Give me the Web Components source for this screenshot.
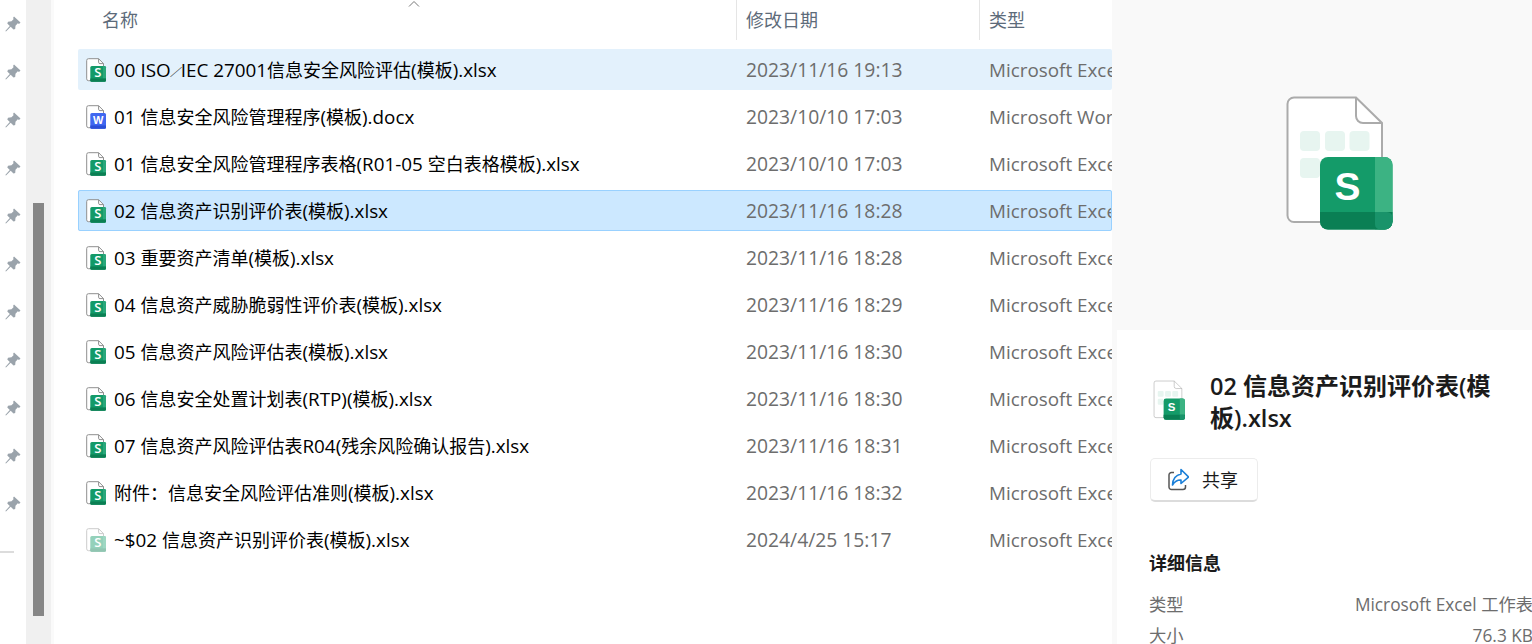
<!DOCTYPE html>
<html lang="zh-CN"><head><meta charset="utf-8"><title>Explorer</title>
<style>
html,body{margin:0;height:100%;overflow:hidden;background:#fff}
body{font-family:"Open Sans","Noto Sans CJK SC",sans-serif}
</style></head><body>
<explorer-app>
  <nav-rail slot="rail"></nav-rail>
  <list-scroll slot="scroll"></list-scroll>
  <file-list slot="list">
    <file-row kind="s" state="hover" name="00 ISO∕IEC 27001信息安全风险评估(模板).xlsx" date="2023/11/16 19:13" type="Microsoft Excel 工作表"></file-row>
    <file-row kind="w" name="01 信息安全风险管理程序(模板).docx" date="2023/10/10 17:03" type="Microsoft Word 文档"></file-row>
    <file-row kind="s" name="01 信息安全风险管理程序表格(R01-05 空白表格模板).xlsx" date="2023/10/10 17:03" type="Microsoft Excel 工作表"></file-row>
    <file-row kind="s" state="selected" name="02 信息资产识别评价表(模板).xlsx" date="2023/11/16 18:28" type="Microsoft Excel 工作表"></file-row>
    <file-row kind="s" name="03 重要资产清单(模板).xlsx" date="2023/11/16 18:28" type="Microsoft Excel 工作表"></file-row>
    <file-row kind="s" name="04 信息资产威胁脆弱性评价表(模板).xlsx" date="2023/11/16 18:29" type="Microsoft Excel 工作表"></file-row>
    <file-row kind="s" name="05 信息资产风险评估表(模板).xlsx" date="2023/11/16 18:30" type="Microsoft Excel 工作表"></file-row>
    <file-row kind="s" name="06 信息安全处置计划表(RTP)(模板).xlsx" date="2023/11/16 18:30" type="Microsoft Excel 工作表"></file-row>
    <file-row kind="s" name="07 信息资产风险评估表R04(残余风险确认报告).xlsx" date="2023/11/16 18:31" type="Microsoft Excel 工作表"></file-row>
    <file-row kind="s" name="附件：信息安全风险评估准则(模板).xlsx" date="2023/11/16 18:32" type="Microsoft Excel 工作表"></file-row>
    <file-row kind="s" faded name="~$02 信息资产识别评价表(模板).xlsx" date="2024/4/25 15:17" type="Microsoft Excel 工作表"></file-row>
  </file-list>
  <detail-pane slot="detail"></detail-pane>
</explorer-app>
<script>
const runs=t=>t.replace(/[\u0020-\u024f]+/g,m=>`<span class="l">${m}</span>`).replace(/∕/g,'<span class="c">∕</span>');
const docPath=`<path d="M2.5 .7H12.6L17.5 5.6V21.4a1.3 1.3 0 0 1-1.3 1.3H2.5a1.8 1.8 0 0 1-1.8-1.8V2.5A1.8 1.8 0 0 1 2.5 .7Z" fill="#fff" stroke="#8f8f8f" stroke-width="1"/>
<path d="M12.6 .7V4.2a1.4 1.4 0 0 0 1.4 1.4H17.5" fill="none" stroke="#8f8f8f" stroke-width="1"/>`;
const sIcon=(faded)=>`<svg width="21" height="24" viewBox="0 0 21 24" style="display:block;${faded?'opacity:.45':''}">${docPath}
<rect x="4.300" y="8" width="15.700" height="15.700" rx="1.500" fill="#139a68"/>
<path d="M17 8H18.500a1.500 1.500 0 0 1 1.500 1.500V20.500H17Z" fill="#2aa77a"/>
<path d="M4.300 20.500H20V22.200a1.500 1.500 0 0 1-1.500 1.500H5.800a1.500 1.500 0 0 1-1.500-1.500Z" fill="#0b7f53"/>
<text x="11.800" y="19.300" text-anchor="middle" font-family="Open Sans" font-weight="600" font-size="13" fill="#fff">S</text></svg>`;
const wIcon=()=>`<svg width="21" height="24" viewBox="0 0 21 24" style="display:block">${docPath}
<rect x="4.300" y="8" width="15.700" height="15.700" rx="1.500" fill="#3f67f0"/>
<path d="M4.300 20.500H20V22.200a1.500 1.500 0 0 1-1.500 1.500H5.800a1.500 1.500 0 0 1-1.500-1.500Z" fill="#2b4fd6"/>
<text x="12.100" y="19.200" text-anchor="middle" font-family="Liberation Sans" font-weight="700" font-size="11" fill="#fff">W</text></svg>`;
const bigIcon=(w,h)=>`<svg width="${w}" height="${h}" viewBox="0 0 112 136" style="display:block">
<path d="M10 3.500H72L98 29V122a6 6 0 0 1-6 6H10a6.500 6.500 0 0 1-6.500-6.500V10A6.500 6.500 0 0 1 10 3.500Z" fill="#fff" stroke="#ababab" stroke-width="2"/>
<path d="M72 3.500V22a7 7 0 0 0 7 7H98" fill="none" stroke="#ababab" stroke-width="2"/>
<g fill="#e7f5f0"><rect x="16" y="37" width="20" height="20" rx="4"/><rect x="41" y="37" width="20" height="20" rx="4"/><rect x="65.500" y="37" width="20" height="20" rx="4"/><rect x="16" y="64" width="20" height="20" rx="4"/></g>
<rect x="36" y="63" width="72.500" height="72.500" rx="8" fill="#149b69"/>
<path d="M91 63H100.500a8 8 0 0 1 8 8V127.500a8 8 0 0 1-8 8H91Z" fill="#3cb383"/>
<path d="M36 118H108.500V127.500a8 8 0 0 1-8 8H44a8 8 0 0 1-8-8Z" fill="#0a7f54"/>
<path d="M91 118H103a5.500 5.500 0 0 1 5.500 5.500V127.500a8 8 0 0 1-8 8H96a5 5 0 0 1-5-5Z" fill="#19936a"/>
<text x="63.500" y="106" text-anchor="middle" font-family="Liberation Sans" font-weight="700" font-size="39" fill="#fff">S</text></svg>`;

class Base extends HTMLElement{
  render(css,html){const r=this.shadowRoot||this.attachShadow({mode:'open'});r.innerHTML=`<style>${css}</style>${html}`}
}
customElements.define('explorer-app',class extends Base{connectedCallback(){this.render(`
:host{display:flex;width:1532px;height:644px;overflow:hidden;background:#fff;font-family:"Open Sans","Noto Sans CJK SC",sans-serif}
.strip{flex:0 0 5px;background:#f9f9f9}
`,`<slot name="rail"></slot><slot name="scroll"></slot><slot name="list"></slot><div class="strip"></div><slot name="detail"></slot>`)}});

customElements.define('nav-rail',class extends Base{connectedCallback(){
const pin=`<svg width="16" height="16" viewBox="0 0 16 16"><path d="M9 .5 15.500 6.500 14 8 12.800 7.300 10.500 9.800 10.200 13 8.500 13.600 5.700 10.700 1 15.500 .3 15 4.800 9.900 2.300 7.500 3 5.800 6.500 5.200 8.700 3 8 2Z" fill="#9aa3ab"/></svg>`;
this.render(`:host{display:block;flex:0 0 26px;width:26px;height:644px;position:relative;overflow:hidden}
.pin{height:48px;display:flex;align-items:center;justify-content:center;box-sizing:border-box}
svg{display:block}
.rule{height:2px;width:14px;background:#dcdcdc;margin-top:23px}
.cut{font:15px "Open Sans",sans-serif;color:#333;line-height:20px;margin-top:90px;white-space:nowrap}`,
Array(11).fill(`<div class="pin">${pin}</div>`).join('')+`<div class="rule"></div><div class="cut">CCF</div>`)}});

customElements.define('list-scroll',class extends Base{connectedCallback(){this.render(`
:host{display:flex;flex:0 0 26px;width:26px;height:644px;box-sizing:border-box;background:#f0f0f0;padding:203px 7px 28px;border-right:1px solid #f0f0f0}
.thumb{flex:1;background:#868686}`,`<div class="thumb"></div>`)}});

customElements.define('file-list',class extends Base{connectedCallback(){this.render(`
:host{display:block;flex:0 0 1061px;width:1061px;height:644px;padding-left:24px;box-sizing:border-box;font-size:18px;overflow:hidden;border-left:3px solid #fafafa;margin-left:-1px}
.head{display:grid;grid-template-columns:658px 243px 133px;height:40px;margin-bottom:9px;color:#5d6b7a;position:relative}
.head div{display:flex;align-items:center;line-height:40px;font-size:18px;box-sizing:border-box;padding-left:9px}
.head div+div{border-left:1px solid #e5e5e5}
.head div:first-child{padding-left:24px}
.sort{position:absolute;left:330px;top:0}
.rows{display:flex;flex-direction:column;gap:6px}`,
`<div class="head"><div>名称</div><div>修改日期</div><div>类型</div><svg class="sort" width="12" height="8" viewBox="0 0 12 8"><path d="M1 6.500 6 1.500 11 6.500" fill="none" stroke="#777" stroke-width="1"/></svg></div><div class="rows"><slot></slot></div>`)}});

customElements.define('file-row',class extends Base{connectedCallback(){
const k=this.getAttribute('kind'),f=this.hasAttribute('faded');
this.render(`
:host{display:grid;grid-template-columns:658px 243px 133px;height:41px;box-sizing:border-box;align-items:center;border-radius:2px;overflow:hidden;white-space:nowrap}
:host([state=hover]){background:#e3f1fc}
:host([state=selected]){background:#cce8ff;outline:1px solid #99d1ff;outline-offset:-1px}
.n{display:flex;align-items:center;gap:7px;padding-left:8px;color:#000;min-width:0;line-height:24px}
.i{flex:none;margin-top:1px}
.l{font-size:18.850px}
.c{display:inline-block;width:18px;margin:0 -4px;font-family:"Noto Sans CJK SC",sans-serif;font-size:18px;line-height:18px;transform:scale(.7,.6) translateY(3px)}
.d,.t{padding-left:10px;color:#6d6d6d;overflow:hidden;line-height:24px}
.d{font-size:19.300px}
.t{font-size:18px}`,
`<div class="n"><span class="i">${k==='w'?wIcon():sIcon(f)}</span><span>${runs(this.getAttribute('name'))}</span></div><div class="d">${this.getAttribute('date')}</div><div class="t">${runs(this.getAttribute('type'))}</div>`)}});

customElements.define('detail-pane',class extends Base{connectedCallback(){this.render(`
:host{display:block;flex:1;min-width:0;height:644px;overflow:hidden;color:#1b1b1b}
.prev{height:330px;background:#f9f9f9;display:flex;justify-content:center;padding:94px 0 0 30px;box-sizing:border-box}
.body{padding:0 0 0 32px}
.title{display:flex;gap:24px;padding-top:40px}
.title .ic{flex:none;margin-left:4px;margin-top:10px}
.title h2{margin:0;font-size:24px;font-weight:700;line-height:32px;width:290px}
.title .l{font-weight:600;font-size:23.500px}
.btn{display:inline-flex;align-items:center;gap:13px;width:108px;height:44px;box-sizing:border-box;margin:24px 0 0 1px;padding-left:16px;border:1px solid #ececec;border-bottom:2px solid #dcdcdc;border-radius:5px;font-size:18px;background:#fff}
.btn span{margin-top:-2px}
h3{margin:0;font-size:18px;font-weight:700;line-height:24px;margin-top:49px}
.kv{display:flex;justify-content:space-between;color:#6d6d6d;font-size:17.300px;line-height:24px;white-space:nowrap;margin-top:18px;width:384px}
.kv+.kv{margin-top:7px}`,
`<div class="prev">${bigIcon(112,136)}</div><div class="body">
<div class="title"><span class="ic">${bigIcon(33,40)}</span><h2>${runs('02 信息资产识别评价表(模板).xlsx')}</h2></div>
<div class="btn"><svg width="22" height="24" viewBox="0 0 22 24"><path d="M7 4.500H4.500a2.500 2.500 0 0 0-2.500 2.500V19A2.500 2.500 0 0 0 4.500 21.500H16a2.500 2.500 0 0 0 2.500-2.500V17" fill="none" stroke="#555" stroke-width="1.500"/><path d="M14 1.500 21.500 9 14 15.500V12C10.500 11.800 8 13 5.500 17 5.800 11 9 7 14 6Z" fill="#fff" stroke="#1a7fd8" stroke-width="1.600" stroke-linejoin="round"/></svg><span>共享</span></div>
<h3>详细信息</h3>
<div class="kv"><span>类型</span><span>Microsoft Excel 工作表</span></div>
<div class="kv"><span>大小</span><span>76.3 KB</span></div>
</div>`)}});
</script>
</body></html>
